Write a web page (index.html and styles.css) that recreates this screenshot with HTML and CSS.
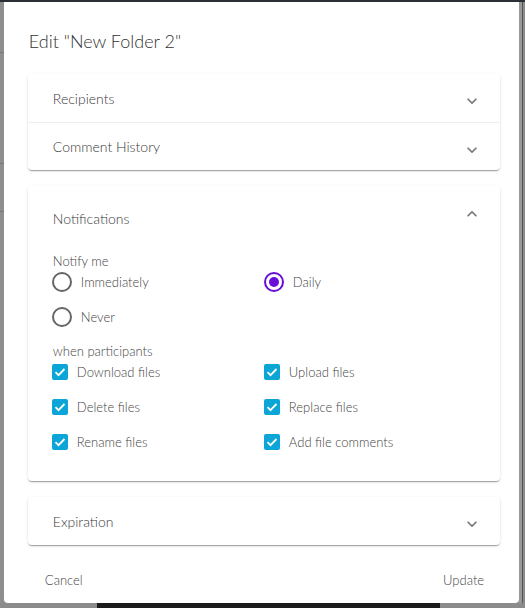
FILE: index.html
```html
<!DOCTYPE html>
<html lang="en">
    <head>
        <title>Edit folder</title>
        <link rel="stylesheet" href="styles.css">
    </head>
    <body>
<div class="topbar"></div>
<div class="stage">
    <div class="side-left">
        <div class="rule r1"></div>
        <div class="rule r2"></div>
        <div class="rule r3"></div>
    </div>
    <div class="dialog">
        <h1 class="title">Edit "New Folder 2"</h1>

        <div class="panel">
            <div class="panel-head">
                <span>Recipients</span>
                <svg class="chev down" viewBox="0 0 24 24"><path d="M7.41 8.59L12 13.17l4.59-4.58L18 10l-6 6-6-6 1.41-1.41z"/></svg>
            </div>
            <div class="panel-head divided">
                <span>Comment History</span>
                <svg class="chev down" viewBox="0 0 24 24"><path d="M7.41 8.59L12 13.17l4.59-4.58L18 10l-6 6-6-6 1.41-1.41z"/></svg>
            </div>
        </div>

        <div class="panel">
            <div class="panel-head open">
                <span>Notifications</span>
                <svg class="chev up" viewBox="0 0 24 24"><path d="M12 8l-6 6 1.41 1.41L12 10.83l4.59 4.58L18 14z"/></svg>
            </div>
            <div class="panel-body">
                <div class="label">Notify me</div>
                <div class="grid radios">
                    <label class="opt"><span class="radio"></span>Immediately</label>
                    <label class="opt"><span class="radio on"></span>Daily</label>
                    <label class="opt"><span class="radio"></span>Never</label>
                </div>
                <div class="label gap">when participants</div>
                <div class="grid">
                    <label class="opt chk"><span class="box"><svg viewBox="0 0 16 16"><path d="M3.5 8.2l3 3 6-6.2"/></svg></span>Download files</label>
                    <label class="opt chk"><span class="box"><svg viewBox="0 0 16 16"><path d="M3.5 8.2l3 3 6-6.2"/></svg></span>Upload files</label>
                    <label class="opt chk"><span class="box"><svg viewBox="0 0 16 16"><path d="M3.5 8.2l3 3 6-6.2"/></svg></span>Delete files</label>
                    <label class="opt chk"><span class="box"><svg viewBox="0 0 16 16"><path d="M3.5 8.2l3 3 6-6.2"/></svg></span>Replace files</label>
                    <label class="opt chk"><span class="box"><svg viewBox="0 0 16 16"><path d="M3.5 8.2l3 3 6-6.2"/></svg></span>Rename files</label>
                    <label class="opt chk"><span class="box"><svg viewBox="0 0 16 16"><path d="M3.5 8.2l3 3 6-6.2"/></svg></span>Add file comments</label>
                </div>
            </div>
        </div>

        <div class="panel">
            <div class="panel-head">
                <span>Expiration</span>
                <svg class="chev down" viewBox="0 0 24 24"><path d="M7.41 8.59L12 13.17l4.59-4.58L18 10l-6 6-6-6 1.41-1.41z"/></svg>
            </div>
        </div>

        <div class="actions">
            <span class="btn">Cancel</span>
            <span class="btn">Update</span>
        </div>
    </div>
    <div class="side-right"></div>
</div>
<div class="bottom">
    <div class="bottom-gray"></div>
    <div class="bottom-dark"></div>
</div>
    </body>
</html>
```

FILE: styles.css
```css
html, body { margin: 0; padding: 0; }
body {
    width: 525px;
    height: 608px;
    overflow: hidden;
    background: #8b8b8b;
    font-family: Lato, "Open Sans", sans-serif;
    font-weight: 300;
    color: #555;
}
.topbar { height: 2px; background: #2c3034; }
.stage { display: flex; height: 601px; }
.side-left { width: 4px; background: #8e8e8e; }
.rule { height: 1px; background: #777; }
.r1 { margin-top: 50px; }
.r2 { margin-top: 110px; }
.r3 { margin-top: 47px; }
.side-right {
    width: 3px;
    background: #999;
    border-right: 1px solid #555;
    margin-right: 2px;
}
.dialog {
    width: 491px;
    background: #fff;
    padding: 0 19px 0 24px;
    border-radius: 0 0 4px 4px;
}
.title {
    margin: 27px 0 21px 1px;
    font-size: 18px;
    line-height: 24px;
    font-weight: 300;
    color: #333;
}
.panel {
    background: #fff;
    border-radius: 4px;
    margin-bottom: 16px;
    box-shadow: 0 2px 1px -1px rgba(0,0,0,.2), 0 1px 1px 0 rgba(0,0,0,.14), 0 1px 3px 0 rgba(0,0,0,.12);
}
.panel-head {
    height: 48px;
    display: flex;
    align-items: center;
    justify-content: space-between;
    padding: 0 18px 0 25px;
    font-size: 14px;
    color: #3a3a3a;
}
.panel-head.divided { border-top: 1px solid #eee; height: 47px; }
.panel-head.open { height: 64px; }
.chev { width: 20px; height: 20px; fill: #757575; }
.chev.down { margin-top: 6px; }
.chev.up { margin-bottom: 8px; }
.panel-body { padding: 3px 24px 26px 24px; }
.label { font-size: 13px; line-height: 16px; padding-left: 1px; color: #444; }
.label.gap { margin-top: 13px; }
.grid {
    display: grid;
    grid-template-columns: 212px 1fr;
    row-gap: 9px;
}
.opt {
    height: 26px;
    display: flex;
    align-items: center;
    font-size: 13px;
    color: #444;
}
.radio {
    width: 16px;
    height: 16px;
    border: 2px solid #666;
    border-radius: 50%;
    margin-right: 9px;
    display: flex;
    align-items: center;
    justify-content: center;
}
.radio.on { border-color: #6a0dd6; }
.radio.on::after {
    content: "";
    width: 10px;
    height: 10px;
    border-radius: 50%;
    background: #6a0dd6;
}
.box {
    width: 16px;
    height: 16px;
    border-radius: 2px;
    background: #0ba5d7;
    margin-right: 9px;
    display: flex;
}
.box svg { width: 16px; height: 16px; fill: none; stroke: #fff; stroke-width: 1.8; }
.actions {
    display: flex;
    justify-content: space-between;
    margin: 26px 16px 0 17px;
    font-size: 13px;
    line-height: 18px;
    color: #444;
}
.bottom { display: flex; height: 5px; }
.bottom-gray { width: 97px; background: #8b8b8b; }
.bottom-dark { width: 343px; background: #1b1b1b; }
```
